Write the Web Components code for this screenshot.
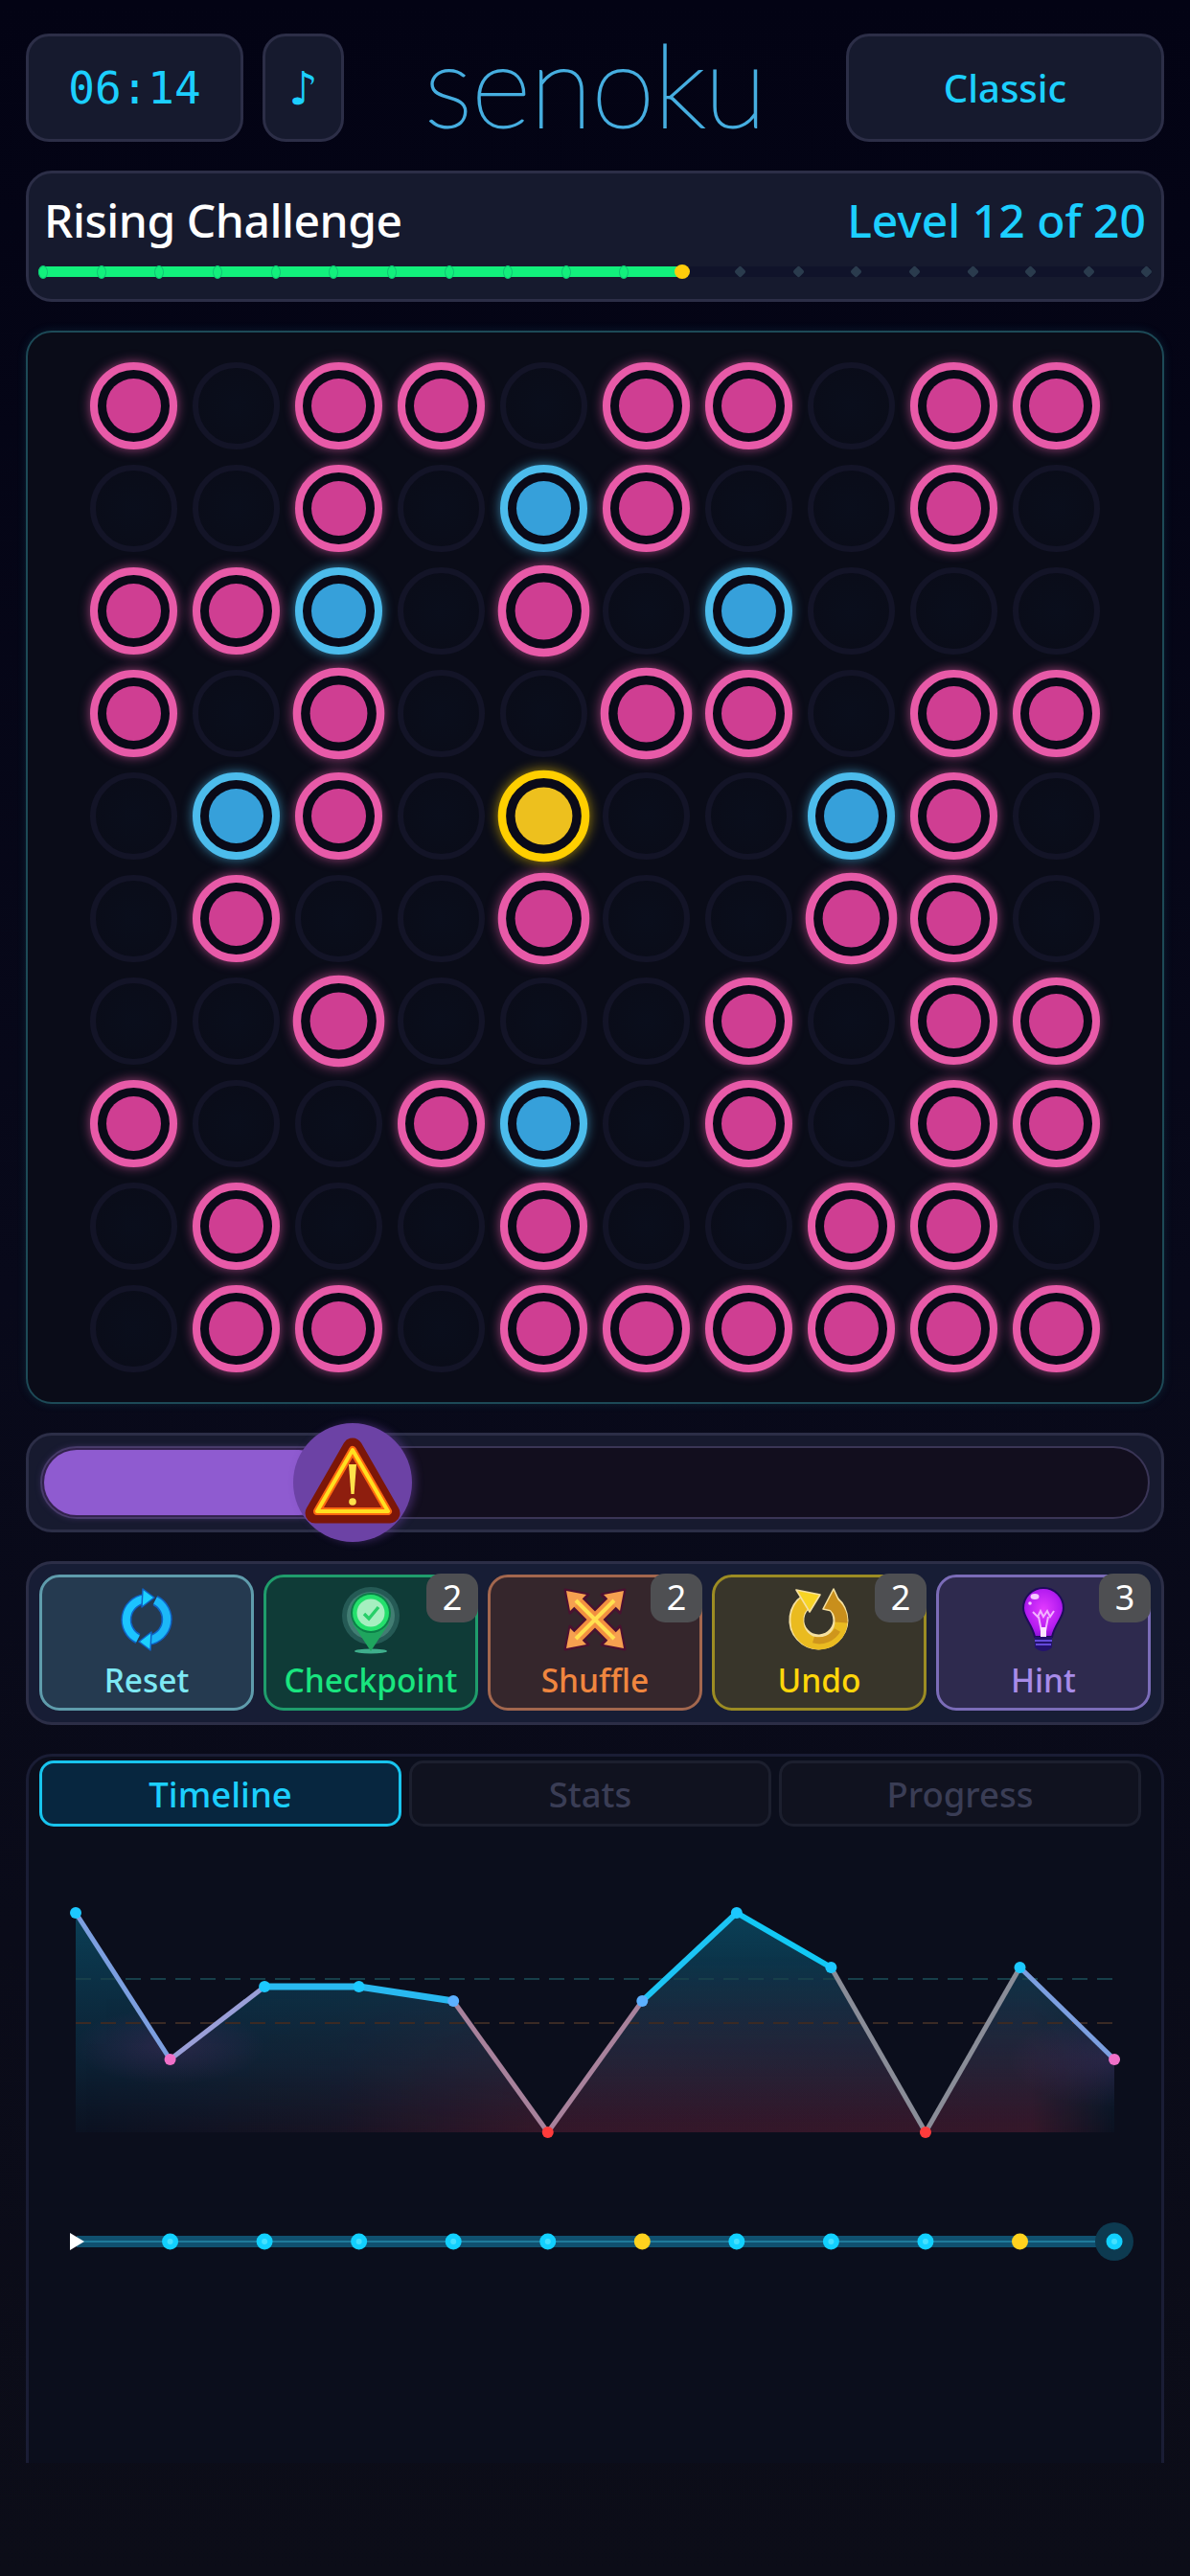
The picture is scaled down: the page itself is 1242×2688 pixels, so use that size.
<!DOCTYPE html>
<html>
<head>
<meta charset="utf-8">
<title>senoku</title>
<style>
  html, body { margin: 0; padding: 0; }
  body {
    width: 1242px; height: 2688px; overflow: hidden; box-sizing: border-box;
    padding: 35px 27px 0 27px;
    display: flex; flex-direction: column; gap: 30px;
    background: linear-gradient(180deg, #030314 0, #08091a 50%, #0c0d18 100%);
    font-family: "Noto Sans", "Open Sans", sans-serif;
  }
</style>
</head>
<body>
  <game-header></game-header>
  <level-bar></level-bar>
  <game-board></game-board>
  <power-slider></power-slider>
  <tool-bar>
    <tool-button kind="reset">Reset</tool-button>
    <tool-button kind="checkpoint" count="2">Checkpoint</tool-button>
    <tool-button kind="shuffle" count="2">Shuffle</tool-button>
    <tool-button kind="undo" count="2">Undo</tool-button>
    <tool-button kind="hint" count="3">Hint</tool-button>
  </tool-bar>
  <tab-panel></tab-panel>

<script>
//header row
class GameHeader extends HTMLElement {
  constructor() {
    super();
    this.attachShadow({mode: "open"}).innerHTML = `
    <style>
      :host { display: flex; height: 113px; gap: 20px; align-items: stretch; }
      .box {
        box-sizing: border-box; display: flex; align-items: center; justify-content: center;
        background: #161a2e; border: 3px solid #2c2e47; border-radius: 24px; color: #1ccfff;
      }
      #timer { width: 227px; font: 46px "DejaVu Sans Mono", monospace; }
      #music { width: 85px; font: 48px "DejaVu Sans", sans-serif; }
      #logo {
        flex: 1; display: flex; align-items: center; justify-content: center; padding-bottom: 8px;
        font: 100 120px/105px Lato, sans-serif; color: #46aee0; letter-spacing: -1px;
        -webkit-text-stroke: 2px #46aee0;
      }
      #mode { width: 332px; font: 500 40px "Noto Sans", sans-serif; }
    </style>
    <div class="box" id="timer">06:14</div>
    <div class="box" id="music">♪</div>
    <div id="logo">senoku</div>
    <div class="box" id="mode">Classic</div>`;
  }
}
customElements.define("game-header", GameHeader);

//level title and 20 step progress
class LevelBar extends HTMLElement {
  constructor() {
    super();
    let nodes = "";
    for (let i = 0; i < 20; i++) {
      nodes += `<i class="${i < 11 ? "done" : i == 11 ? "now" : "todo"}"></i>`;
    }
    this.attachShadow({mode: "open"}).innerHTML = `
    <style>
      :host {
        display: block; box-sizing: border-box; height: 137px; padding: 0 10px;
        background: #161a2e; border: 3px solid #2c2e47; border-radius: 27px;
      }
      #top {
        display: flex; justify-content: space-between; height: 88px; align-items: center; box-sizing: border-box;
        padding: 10px 6px 0 6px; font: 500 48px/60px "Noto Sans", sans-serif; color: #fff;
      }
      #top span { letter-spacing: -.45px; }
      #top b { font-weight: 500; color: #1ccfff; }
      #track {
        position: relative; height: 11px; margin-top: 9px; background: #10132a; border-radius: 6px;
        display: flex; justify-content: space-between; align-items: center;
      }
      #fill { position: absolute; left: 0; top: 0; height: 11px; width: 671px; background: #12f07c; border-radius: 6px; }
      i { position: relative; display: block; width: 10px; height: 11px; border-radius: 50%; box-sizing: border-box; }
      .done { background: #12f07c; border: 1px solid #10c474; height: 14px; }
      .now { width: 16px; height: 15px; margin: 0 -3px; background: #ffcd0a; }
      .todo { background: #2a3b4d; width: 9px; height: 9px; margin: 0 .5px; border-radius: 2px; transform: rotate(45deg); }
    </style>
    <div id="top"><span>Rising Challenge</span><b>Level 12 of 20</b></div>
    <div id="track"><div id="fill"></div>${nodes}</div>`;
  }
}
customElements.define("level-bar", LevelBar);

//board, p = pink b = blue y = yellow . = empty
const BOARD = [
  "p.pp.pp.pp",
  "..p.bp..p.",
  "ppb.p.b...",
  "p.p..pp.pp",
  ".bp.y..bp.",
  ".p..p..pp.",
  "..p...p.pp",
  "p..pb.p.pp",
  ".p..p..pp.",
  ".pp.pppppp"
];
const BIG = ["3,2", "2,4", "4,4", "5,4", "3,5", "6,2", "5,7"];

class GameBoard extends HTMLElement {
  constructor() {
    super();
    let cells = "";
    BOARD.forEach((row, r) => {
      [...row].forEach((c, col) => {
        let big = BIG.includes(r + "," + col) ? " big" : "";
        cells += `<div class="c ${c == "." ? "e" : c}${big}"></div>`;
      });
    });
    this.attachShadow({mode: "open"}).innerHTML = `
    <style>
      :host {
        display: grid; box-sizing: border-box; height: 1120px;
        grid-template-columns: repeat(10, 91px); gap: 16px; justify-content: center; align-content: center;
        background: #0a0c18; border: 2px solid #1d4a57; border-radius: 27px;
        box-shadow: 0 0 10px rgba(30, 120, 140, .22);
      }
      .c {
        width: 91px; height: 91px; box-sizing: border-box; border-radius: 50%;
        display: flex; align-items: center; justify-content: center;
        background: #0a0a18; border: 8px solid var(--ring); box-shadow: 0 0 12px var(--glow);
        filter: blur(.5px);
      }
      .c::after { content: ""; width: 57px; height: 57px; border-radius: 50%; background: var(--dot); }
      .e { border: 6px solid #131427; box-shadow: none; background: radial-gradient(circle, #0a0e1c 0, #0a0c18 100%); }
      .e::after { display: none; }
      .p { --ring: #e85aa8; --dot: #cf3e92; --glow: rgba(232, 90, 168, .65); }
      .b { --ring: #4cbcec; --dot: #36a0da; --glow: rgba(76, 188, 236, .65); }
      .y { --ring: #ffcf00; --dot: #edc01e; --glow: rgba(255, 207, 0, .65); transform: scale(1.06); }
      .big { transform: scale(1.05); }
    </style>
    ${cells}`;
  }
}
customElements.define("game-board", GameBoard);

//slider with warning knob
class PowerSlider extends HTMLElement {
  constructor() {
    super();
    this.attachShadow({mode: "open"}).innerHTML = `
    <style>
      :host {
        display: block; box-sizing: border-box; height: 104px; padding: 11px 12px;
        background: #171a2f; border: 3px solid #2c2e47; border-radius: 27px;
      }
      #track {
        position: relative; box-sizing: border-box; height: 76px; padding: 2px;
        background: #120e1e; border: 2px solid #3a3556; border-radius: 38px;
      }
      #fill {
        width: 300px; height: 100%; background: #8f5bd0; border-radius: 34px;
        box-shadow: 0 0 8px rgba(143, 91, 208, .7);
      }
      #knob {
        position: absolute; left: 262px; top: -26px; width: 124px; height: 124px; border-radius: 50%;
        background: #6c42a5; box-shadow: 4px 0 8px rgba(108, 66, 165, .45);
        display: flex; align-items: center; justify-content: center;
      }
    </style>
    <div id="track">
      <div id="fill"></div>
      <div id="knob">
        <svg width="124" height="124" viewBox="-62 -62 124 124">
          <path d="M0 -36 L39 32 H-39 Z" fill="#7c1608" stroke="#7c1608" stroke-width="21" stroke-linejoin="round"/>
          <path d="M0 -34 L37 30 H-37 Z" fill="#8e1e0e" stroke="#ff6a10" stroke-width="8" stroke-linejoin="round"/>
          <path d="M0 -34 L37 30 H-37 Z" fill="none" stroke="#ffe020" stroke-width="4" stroke-linejoin="round"/>
          <path d="M-4 -19 H4 L1.6 12 H-1.6 Z" fill="#ffe24a"/>
          <circle cx="0" cy="20" r="3.8" fill="#ffe24a"/>
        </svg>
      </div>
    </div>`;
  }
}
customElements.define("power-slider", PowerSlider);

const ARM = [0, 90, 180, 270];
const ICONS = {
  reset: `<svg width="72" height="72" viewBox="-6 -6 72 72">
    <g fill="none">
      <path d="M21 50 A22 22 0 0 1 28 8.5" stroke="#0f62c4" stroke-width="11"/>
      <path d="M21 50 A22 22 0 0 1 28 8.5" stroke="#1cc4ff" stroke-width="8"/>
      <path d="M26 -2 L38 7 L25 17 Z" fill="#1cd0ff" stroke="#0f62c4" stroke-width="1.5" stroke-linejoin="round"/>
    </g>
    <g transform="rotate(180 30 30)" fill="none">
      <path d="M21 50 A22 22 0 0 1 28 8.5" stroke="#0f62c4" stroke-width="11"/>
      <path d="M21 50 A22 22 0 0 1 28 8.5" stroke="#1cb8f8" stroke-width="8"/>
      <path d="M26 -2 L38 7 L25 17 Z" fill="#1cd0ff" stroke="#0f62c4" stroke-width="1.5" stroke-linejoin="round"/>
    </g>
  </svg>`,
  checkpoint: `<svg width="72" height="72" viewBox="-36 -36 72 72">
    <circle cx="0" cy="-4" r="30" fill="#2e6660" opacity=".75"/>
    <circle cx="0" cy="-4" r="25" fill="#5b9a8c" opacity=".55"/>
    <ellipse cx="0" cy="33" rx="17" ry="2.4" fill="#3fae8c"/>
    <path d="M-19 4 L0 33 L19 4 Z" fill="#1fa55e"/>
    <circle cx="0" cy="-7" r="21" fill="#0c7f48"/>
    <circle cx="0" cy="-7" r="19" fill="#24e06c"/>
    <circle cx="0" cy="-7" r="14.5" fill="#a6efc0"/>
    <path d="M-7 -6 L-2 -1 L8 -13" fill="none" stroke="#27cf68" stroke-width="3.4"/>
  </svg>`,
  shuffle: `<svg width="72" height="72" viewBox="-36 -36 72 72">
    ${ARM.map(a => `<g transform="rotate(${a})">
      <path d="M0 0 L22 -22" stroke="#4a1030" stroke-width="16"/>
      <path d="M31 -31 L7 -26 L26 -7 Z" fill="#4a1030" stroke="#4a1030" stroke-width="3" stroke-linejoin="round"/>
    </g>`).join("")}
    ${ARM.map(a => `<g transform="rotate(${a})">
      <path d="M0 0 L22 -22" stroke="#f29040" stroke-width="12"/>
      <path d="M30 -30 L9 -26 L26 -9 Z" fill="#f6a050"/>
    </g>`).join("")}
    ${ARM.map(a => `<path transform="rotate(${a})" d="M0 0 L20 -20" stroke="#ffe050" stroke-width="4"/>`).join("")}
  </svg>`,
  undo: `<svg width="72" height="72" viewBox="-36 -36 72 72">
    <path d="M10 -20 A23 23 0 1 1 -13 -19" fill="none" stroke="#f5e0a0" stroke-width="16"/>
    <path d="M15 -32 L27 -6 L4 -11 Z" fill="#c98f1c" stroke="#f5e0a0" stroke-width="1.6" stroke-linejoin="round"/>
    <path d="M23 2 A23 23 0 0 1 -23 2 A23 23 0 0 1 -13 -19" fill="none" stroke="#eabb20" stroke-width="13"/>
    <path d="M12 -18 A23 23 0 0 1 23 3" fill="none" stroke="#c98f1c" stroke-width="13"/>
    <path d="M-6 21 A22 22 0 0 0 19 11" fill="none" stroke="#cf961c" stroke-width="7"/>
    <path d="M-24 -31 L1 -26 L-10 -8 Z" fill="#f8d424" stroke="#f5e0a0" stroke-width="1.6" stroke-linejoin="round"/>
  </svg>`,
  hint: `<svg width="72" height="72" viewBox="-36 -36 72 72">
    <defs><radialGradient id="bulb" cx=".5" cy=".45" r=".6"><stop offset="0" stop-color="#e43cff"/><stop offset=".7" stop-color="#b41cf0"/><stop offset="1" stop-color="#8210d0"/></radialGradient></defs>
    <path d="M-21 -12 A21 21 0 1 1 21 -12 C21 -2 12 4 9 18 H-9 C-12 4 -21 -2 -21 -12 Z" fill="url(#bulb)" stroke="#1f0b5a" stroke-width="2"/>
    <path d="M-11 -8 L-6 -3 L-3 -9 L0 -3 L4 -9 L7 -3 L11 -9 M-5 -3 L-2 12 M5 -3 L2 12" fill="none" stroke="#f2b4ff" stroke-width="2"/>
    <rect x="-3" y="8" width="6" height="10" fill="#fbe4ff"/>
    <ellipse cx="-9" cy="-24" rx="4.5" ry="3" fill="#f6c8ff"/>
    <circle cx="-14" cy="-17" r="1.8" fill="#f6c8ff"/>
    <path d="M-9 18 H9 V29 Q5 33 0 33 Q-5 33 -9 29 Z" fill="#24126e"/>
    <path d="M-9 22 H9 M-8 26 H8" stroke="#7a5cff" stroke-width="1.4"/>
  </svg>`
};
const TOOL_COLORS = {
  reset: ["#253a50", "#5f9cac", "#7de8f4"],
  checkpoint: ["#0f3b37", "#1f9d6c", "#19e57f"],
  shuffle: ["#35262c", "#a3674e", "#f0863f"],
  undo: ["#38352a", "#9c8c23", "#ffd60a"],
  hint: ["#2e2a4e", "#7b6cb8", "#a78be8"]
};

class ToolButton extends HTMLElement {
  constructor() {
    super();
    let kind = this.getAttribute("kind");
    let count = this.getAttribute("count");
    let col = TOOL_COLORS[kind];
    this.attachShadow({mode: "open"}).innerHTML = `
    <style>
      :host {
        position: relative; display: flex; flex-direction: column; align-items: center; box-sizing: border-box;
        height: 142px; padding-top: 8px; border-radius: 21px;
        background: ${col[0]}; border: 3px solid ${col[1]}; color: ${col[2]};
        font: 500 33.5px/40px "Noto Sans", sans-serif;
      }
      #icon { height: 72px; margin-bottom: 7px; }
      #badge {
        position: absolute; right: -3px; top: -4px; width: 54px; height: 51px; border-radius: 15px;
        background: #4e4f52; color: #fff; font: 36px/50px "Noto Sans", sans-serif; text-align: center;
      }
    </style>
    <div id="icon">${ICONS[kind]}</div>
    <slot></slot>
    ${count ? `<div id="badge">${count}</div>` : ""}`;
  }
}
customElements.define("tool-button", ToolButton);

class ToolBar extends HTMLElement {
  constructor() {
    super();
    this.attachShadow({mode: "open"}).innerHTML = `
    <style>
      :host {
        display: grid; grid-template-columns: repeat(5, 1fr); gap: 10px; box-sizing: border-box;
        height: 171px; padding: 11px 11px;
        background: #171d35; border: 3px solid #2c2e47; border-radius: 27px;
      }
    </style>
    <slot></slot>`;
  }
}
customElements.define("tool-bar", ToolBar);

//chart data, page coords
const XS = [...Array(12).keys()].map(i => 79 + i * 98.55);
const YS = [1996, 2149, 2073, 2073, 2088, 2225, 2088, 1996, 2053, 2225, 2053, 2149];
const DOTS = ["#1cc8ff", "#f070c8", "#1cc8ff", "#1cc8ff", "#5cb0ff", "#ff3b3b", "#5cb0ff", "#1cc8ff", "#1cc8ff", "#ff3b3b", "#1cc8ff", "#f070c8"];
const SEGS = [
  ["#7c9fe0", 5], ["#9a9fd8", 5], ["#29b9f0", 7], ["#29b9f0", 7], ["#a8829c", 5], ["#a8829c", 5],
  ["#1cc4f4", 6], ["#12c8f4", 6], ["#8a8d98", 5], ["#8a8d98", 5], ["#7c9fe0", 5]
];

class ScoreChart extends HTMLElement {
  constructor() {
    super();
    let pts = XS.map((x, i) => x + "," + YS[i]).join(" ");
    let area = `M79,2225 L${pts} L1163,2225 Z`;
    let segs = SEGS.map((s, i) =>
      `<line x1="${XS[i]}" y1="${YS[i]}" x2="${XS[i + 1]}" y2="${YS[i + 1]}" stroke="${s[0]}" stroke-width="${s[1]}"/>`).join("");
    let dots = XS.map((x, i) => `<circle cx="${x}" cy="${YS[i]}" r="6" fill="${DOTS[i]}"/>`).join("");
    let beads = XS.slice(1).map((x, i) => {
      let yellow = i == 5 || i == 9;
      return `<ellipse cx="${x}" cy="2339" rx="8.5" ry="8.5" fill="${yellow ? "#ffd21e" : "#12d0ff"}"/>` +
        (yellow ? "" : `<circle cx="${x}" cy="2339" r="3" fill="#45e0ff"/>`);
    }).join("");
    this.attachShadow({mode: "open"}).innerHTML = `
    <style>
      :host { display: block; margin-top: 54px; }
      svg { display: block; }
    </style>
    <svg width="1181" height="420" viewBox="30 1960 1181 420">
      <defs>
        <clipPath id="ar"><path d="${area}"/></clipPath>
        <linearGradient id="teal" x1="0" y1="0" x2="0" y2="1">
          <stop offset="0" stop-color="#08b4e0" stop-opacity=".3"/>
          <stop offset=".7" stop-color="#0f6a90" stop-opacity=".2"/>
          <stop offset="1" stop-color="#0f5a80" stop-opacity=".05"/>
        </linearGradient>
        <linearGradient id="red" x1="79" y1="0" x2="1163" y2="0" gradientUnits="userSpaceOnUse">
          <stop offset="0" stop-color="#ff3050" stop-opacity="0"/>
          <stop offset=".25" stop-color="#ff3050" stop-opacity=".05"/>
          <stop offset=".45" stop-color="#ff3050" stop-opacity=".17"/>
          <stop offset=".92" stop-color="#ff3050" stop-opacity=".17"/>
          <stop offset="1" stop-color="#ff3050" stop-opacity="0"/>
        </linearGradient>
        <linearGradient id="fade" x1="0" y1="2040" x2="0" y2="2225" gradientUnits="userSpaceOnUse">
          <stop offset="0" stop-color="#000"/>
          <stop offset="1" stop-color="#fff"/>
        </linearGradient>
        <mask id="up"><rect x="30" y="1960" width="1181" height="300" fill="url(#fade)"/></mask>
        <radialGradient id="pink"><stop offset="0" stop-color="#e040c0" stop-opacity=".13"/><stop offset="1" stop-color="#e040c0" stop-opacity="0"/></radialGradient>
      </defs>
      <g clip-path="url(#ar)">
        <rect x="79" y="1996" width="1084" height="229" fill="url(#teal)"/>
        <rect x="79" y="1996" width="1084" height="229" fill="url(#red)" mask="url(#up)"/>
        <ellipse cx="177" cy="2135" rx="100" ry="40" fill="url(#pink)"/>
        <ellipse cx="1163" cy="2149" rx="110" ry="50" fill="url(#pink)"/>
      </g>
      <line x1="79" y1="2065" x2="1163" y2="2065" stroke="#173f4a" stroke-width="2" stroke-dasharray="16 10"/>
      <line x1="79" y1="2111" x2="1163" y2="2111" stroke="#3a2a24" stroke-width="2" stroke-dasharray="16 10"/>
      ${segs}${dots}

      <rect x="80" y="2333" width="1083" height="12" fill="#10506f"/>
      <rect x="80" y="2338" width="1083" height="2" fill="#1f7a9a"/>
      <circle cx="1163" cy="2339" r="20" fill="#0d3a50"/>
      ${beads}
      <path d="M73 2330 L88 2339 L73 2348 Z" fill="#fff"/>
    </svg>`;
  }
}
customElements.define("score-chart", ScoreChart);

class TabPanel extends HTMLElement {
  constructor() {
    super();
    this.attachShadow({mode: "open"}).innerHTML = `
    <style>
      :host {
        display: block; box-sizing: border-box; height: 740px; padding: 4px 0 0 0;
        background: #0b0e1c; border: 3px solid #1a1d35; border-bottom: 0; border-radius: 27px 27px 0 0;
      }
      #tabs { display: grid; grid-template-columns: repeat(3, 378px); gap: 8px; padding-left: 11px; }
      .t {
        box-sizing: border-box; height: 69px; display: flex; align-items: center; justify-content: center;
        border-radius: 15px; background: #10121f; border: 3px solid #1c1f2e; color: #3a3d55;
        font: 500 36.5px "Noto Sans", sans-serif;
      }
      .on { background: #07263f; border-color: #18c4ee; color: #1ccfff; }
    </style>
    <div id="tabs">
      <div class="t on">Timeline</div>
      <div class="t">Stats</div>
      <div class="t">Progress</div>
    </div>
    <score-chart></score-chart>`;
  }
}
customElements.define("tab-panel", TabPanel);
</script>
</body>
</html>
